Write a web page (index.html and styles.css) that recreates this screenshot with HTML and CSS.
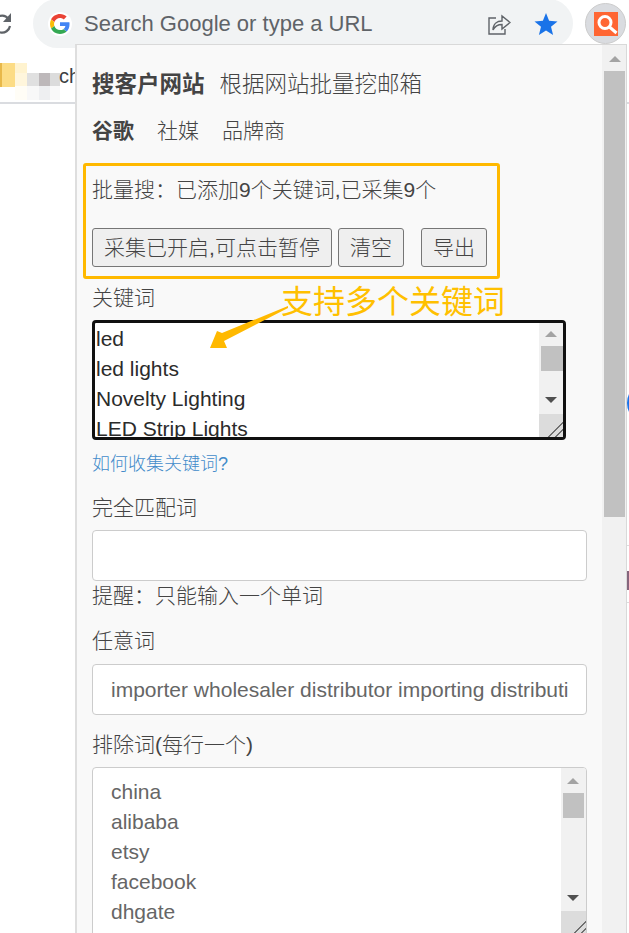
FILE: index.html
```html
<!DOCTYPE html>
<html lang="en">
<head>
  <meta charset="UTF-8">
  <meta name="viewport" content="width=device-width, initial-scale=1.0">
  <title>搜客户网站</title>
  <link rel="stylesheet" href="styles.css">
</head>
<body>
  <div class="toolbar">
    <svg class="reload" width="12" height="24" viewBox="0 0 12 24">
      <path d="M8.500 7A8 8 0 0 0 -6 11a8 8 0 0 0 16 3" fill="none" stroke="#5f6368" stroke-width="2.200"/>
      <path d="M11 1v9H3z" fill="#5f6368"/>
    </svg>
    <div class="omnibox">
      <span class="g-badge">
        <svg width="20" height="20" viewBox="0 0 48 48">
          <path fill="#EA4335" d="M24 9.500c3.500 0 6.700 1.300 9.100 3.500l6.800-6.800C35.800 2.400 30.300 0 24 0 14.600 0 6.500 5.400 2.600 13.200l7.900 6.200C12.400 13.600 17.700 9.500 24 9.500z"/>
          <path fill="#4285F4" d="M46.900 24.500c0-1.600-.1-3.100-.4-4.500H24v9h12.900c-.6 3-2.200 5.500-4.700 7.200l7.600 5.900c4.400-4.100 7.100-10.200 7.100-17.600z"/>
          <path fill="#FBBC05" d="M10.500 28.600c-.5-1.400-.8-3-.8-4.600s.3-3.200.8-4.600l-7.900-6.200C.9 16.500 0 20.100 0 24s.9 7.500 2.600 10.800l7.900-6.200z"/>
          <path fill="#34A853" d="M24 48c6.500 0 11.900-2.100 15.900-5.800l-7.600-5.900c-2.200 1.400-4.900 2.300-8.200 2.300-6.300 0-11.600-4.200-13.500-9.900l-7.900 6.200C6.500 42.600 14.600 48 24 48z"/>
        </svg>
      </span>
      <span class="omni-text">Search Google or type a URL</span>
      <svg class="share" width="24" height="24" viewBox="0 0 24 24">
        <path d="M9 6H2v16h16v-5" fill="none" stroke="#5f6368" stroke-width="1.400"/>
        <path d="M6 18c0-6 4-9 9-9V4l8 6.500-8 6.500v-4.500c-4 0-7 1.500-9 5.500z" fill="none" stroke="#5f6368" stroke-width="1.400"/>
      </svg>
      <svg class="star" width="24" height="24" viewBox="0 0 24 24">
        <path d="M12 1l3.100 7.800 8.400.6-6.500 5.400 2.100 8.200L12 18.500 4.900 23 7 14.800.5 9.400l8.400-.6z" fill="#1a73e8"/>
      </svg>
    </div>
    <span class="ext-btn">
      <svg width="24" height="24" viewBox="0 0 24 24">
        <rect width="24" height="24" fill="#ff6633"/>
        <circle cx="11" cy="10.500" r="6" fill="none" stroke="#fff" stroke-width="3"/>
        <path d="M15.500 15l7 6" stroke="#fff" stroke-width="3" fill="none"/>
      </svg>
    </span>
  </div>

  <div class="bookmarks">
    <span class="bm-folder"></span>
    <span class="bm-blur"></span>
    <span class="bm-text">cha</span>
  </div>

  <span class="page-blue"></span>
  <span class="page-strip"></span>

  <div class="popup">
    <div class="content">
      <div class="title"><b>搜客户网站</b><span>根据网站批量挖邮箱</span></div>
      <div class="tabs"><b>谷歌</b><span>社媒</span><span>品牌商</span></div>

      <div class="batch">
        <p>批量搜：已添加9个关键词,已采集9个</p>
        <div class="batch-btns">
          <button class="btn btn-run">采集已开启,可点击暂停</button>
          <button class="btn btn-clear">清空</button>
          <button class="btn btn-export">导出</button>
        </div>
      </div>

      <div class="label label-kw">关键词</div>
      <div class="area area-kw">
        <div class="area-lines">led<br>led lights<br>Novelty Lighting<br>LED Strip Lights</div>
        <div class="sbar">
          <i class="up"></i><i class="thumb"></i><i class="down"></i><i class="grip"></i>
        </div>
      </div>
      <a class="help" href="#">如何收集关键词?</a>

      <div class="label label-exact">完全匹配词</div>
      <div class="field"></div>
      <div class="hint">提醒：只能输入一个单词</div>

      <div class="label label-any">任意词</div>
      <div class="field field-any">importer wholesaler distributor importing distributi</div>

      <div class="label label-ex">排除词(每行一个)</div>
      <div class="area area-ex">
        <div class="area-lines">china<br>alibaba<br>etsy<br>facebook<br>dhgate</div>
        <div class="sbar">
          <i class="up"></i><i class="thumb"></i><i class="down"></i><i class="grip"></i>
        </div>
      </div>
    </div>
    <div class="popup-bar">
      <i class="up"></i><i class="thumb"></i>
    </div>

    <div class="note">支持多个关键词</div>
    <svg class="note-arrow" width="90" height="50" viewBox="0 0 90 50">
      <path d="M80 2L14 29l-5-2-7 17h17l-3-7L80 4z" fill="#ffb900"/>
    </svg>
  </div>
</body>
</html>
```

FILE: styles.css
```css
* {
  box-sizing: border-box;
}

body {
  width: 629px;
  height: 933px;
  margin: 0;
  overflow: hidden;
  position: relative;
  background-color: #ffffff;
  color: #444444;
  font-family: "Liberation Sans", "Noto Sans CJK SC", sans-serif;
  font-size: 21px;
  font-weight: 300;
}

b {
  font-weight: 700;
}

/* browser chrome */
.toolbar {
  height: 49px;
  display: flex;
  align-items: flex-start;
}

.reload {
  margin-top: 12px;
  margin-right: 21px;
  flex: none;
}

.omnibox {
  width: 540px;
  height: 49px;
  background-color: #f1f3f4;
  border-radius: 25px;
  display: flex;
  align-items: center;
  padding-left: 15px;
  flex: none;
  margin-top: -1px;
}

.g-badge {
  width: 24px;
  height: 24px;
  border-radius: 50%;
  background-color: #ffffff;
  display: flex;
  align-items: center;
  justify-content: center;
  flex: none;
}

.omni-text {
  margin-left: 12px;
  font-size: 22px;
  font-weight: 400;
  color: #5f6368;
  white-space: nowrap;
  flex: 1;
}

.share {
  margin-right: 23px;
}

.star {
  margin-right: 15px;
}

.ext-btn {
  width: 41px;
  height: 41px;
  border-radius: 50%;
  background-color: #dadce0;
  border: 1px solid #cccccc;
  margin-left: 12px;
  margin-top: 3px;
  display: flex;
  align-items: center;
  justify-content: center;
  flex: none;
}

.bookmarks {
  height: 55px;
  border-bottom: 2px solid #dadce0;
  position: relative;
}

.bm-folder {
  position: absolute;
  left: 0;
  top: 14px;
  width: 15px;
  height: 24px;
  background-color: #fcdc85;
  border-left: 2px solid #e8b84a;
}

.bm-blur {
  position: absolute;
  left: 15px;
  top: 14px;
  width: 45px;
  height: 37px;
  background:
    linear-gradient(90deg, #fff6dc 0 12px, #e0e0e0 12px 24px, #bdb8ba 24px 35px, #dcdcdc 35px) 0 10px / 100% 13px no-repeat,
    linear-gradient(90deg, #fff3cf 0 12px, #ffffff 12px) 0 0 / 100% 10px no-repeat,
    linear-gradient(90deg, #fffdf6 0 12px, #f8f8f8 12px 24px, #eeeff1 24px 35px, #f9f9f9 35px) 0 23px / 100% 14px no-repeat;
}

.bm-text {
  position: absolute;
  left: 59px;
  top: 16px;
  font-size: 20px;
  font-weight: 400;
  color: #3c4043;
}

.page-blue {
  position: absolute;
  left: 627px;
  top: 388px;
  width: 20px;
  height: 30px;
  border-radius: 50%;
  background-color: #1a73e8;
}

.page-strip {
  position: absolute;
  left: 627px;
  top: 545px;
  width: 2px;
  height: 58px;
  border-top: 1px solid #dddddd;
  border-bottom: 1px solid #dddddd;
  background: linear-gradient(#ffffff 0 25px, #85657c 25px 44px, #ffffff 44px);
}

/* extension popup */
.popup {
  position: absolute;
  left: 75px;
  top: 44px;
  width: 552px;
  height: 889px;
  background-color: #f9f9f9;
  border: 1px solid #d9d9d9;
  border-left: 2px solid #dedede;
  border-bottom: none;
  display: flex;
}

.content {
  width: 525px;
  padding: 0 15px;
  flex: none;
}

.title {
  margin-top: 24px;
  height: 32px;
  line-height: 32px;
  font-size: 22.5px;
  white-space: nowrap;
}

.title b {
  margin-right: 15px;
}

.tabs {
  margin-top: 14px;
  height: 32px;
  line-height: 32px;
  display: flex;
  gap: 23px;
}

.batch {
  width: 417px;
  height: 116px;
  margin-top: 16px;
  margin-left: -9px;
  padding: 9px 0 0 6px;
  border: 3px solid #ffb900;
  border-radius: 3px;
}

.batch p {
  margin: 0;
  line-height: 30px;
  white-space: nowrap;
}

.batch-btns {
  margin-top: 23px;
  display: flex;
}

.btn {
  height: 39px;
  padding: 0 0 4px;
  background-color: #efefef;
  border: 1px solid #767676;
  border-radius: 3px;
  color: #444444;
  font-family: inherit;
  font-size: 21px;
  font-weight: 300;
}

.btn-run {
  width: 240px;
}

.btn-clear {
  width: 66px;
  margin-left: 6px;
}

.btn-export {
  width: 66px;
  margin-left: 17px;
}

.label {
  height: 30px;
  line-height: 30px;
}

.label-kw {
  margin-top: 4px;
}

.label-exact {
  margin-top: 14px;
}

.label-any {
  margin-top: 15px;
}

.label-ex {
  margin-top: 15px;
}

.area {
  display: flex;
  justify-content: space-between;
  overflow: hidden;
  background-color: #ffffff;
  line-height: 30px;
}

.area-kw {
  width: 474px;
  height: 120px;
  margin-top: 7px;
  border: 3px solid #101010;
  border-radius: 4px;
  padding: 1px 0 0 1px;
  color: #2b2b2b;
  font-weight: 400;
}

.area-ex {
  width: 495px;
  height: 170px;
  margin-top: 7px;
  border: 1px solid #cccccc;
  border-radius: 4px;
  padding: 9px 0 0 18px;
  color: #666666;
  font-weight: 400;
}

.area-lines {
  white-space: nowrap;
}

.sbar {
  width: 24px;
  flex: none;
  background-color: #f1f1f1;
  position: relative;
}

.area-kw .sbar {
  margin-top: -1px;
}

.up,
.down {
  display: block;
  width: 0;
  height: 0;
  position: absolute;
  border-left: 6px solid transparent;
  border-right: 6px solid transparent;
}

.up {
  top: 8px;
  left: 6px;
  border-bottom: 6px solid #a3a3a3;
}

.thumb {
  display: block;
  position: absolute;
  top: 23px;
  left: 2px;
  width: 22px;
  height: 25px;
  background-color: #c1c1c1;
}

.down {
  top: 74px;
  left: 6px;
  border-top: 6px solid #505050;
}

.grip {
  display: block;
  position: absolute;
  bottom: 0;
  left: 0;
  width: 100%;
  height: 23px;
  background-color: #dcdcdc;
  background-image: linear-gradient(135deg, transparent 0 68%, #707070 68% 72%, transparent 72% 82%, #707070 82% 86%, transparent 86%);
}

.area-ex .sbar {
  width: 25px;
  margin-top: -9px;
}

.area-ex .up {
  top: 10px;
}

.area-ex .thumb {
  top: 25px;
  width: 21px;
}

.area-ex .down {
  top: 127px;
}

.area-ex .grip {
  height: 25px;
}

.help {
  display: block;
  margin-top: 9px;
  height: 30px;
  line-height: 30px;
  font-size: 18px;
  color: #428bca;
  text-decoration: none;
}

.field {
  width: 495px;
  height: 51px;
  margin-top: 7px;
  padding-left: 18px;
  background-color: #ffffff;
  border: 1px solid #cccccc;
  border-radius: 4px;
  line-height: 49px;
  white-space: nowrap;
  overflow: hidden;
}

.field-any {
  margin-top: 8px;
  color: #666666;
  font-weight: 400;
}

.hint {
  height: 30px;
  line-height: 30px;
}

.popup-bar {
  width: 24px;
  flex: none;
  position: relative;
  background-color: #f1f1f1;
}

.popup-bar .thumb {
  top: 26px;
  left: 2px;
  width: 21px;
  height: 446px;
}

.popup-bar .up {
  top: 11px;
  left: 7px;
}

/* annotation over the form */
.note {
  position: absolute;
  left: 204px;
  top: 237px;
  font-size: 32px;
  font-weight: 400;
  line-height: 40px;
  color: #ffc000;
  white-space: nowrap;
}

.note-arrow {
  position: absolute;
  left: 131px;
  top: 259px;
}
```
